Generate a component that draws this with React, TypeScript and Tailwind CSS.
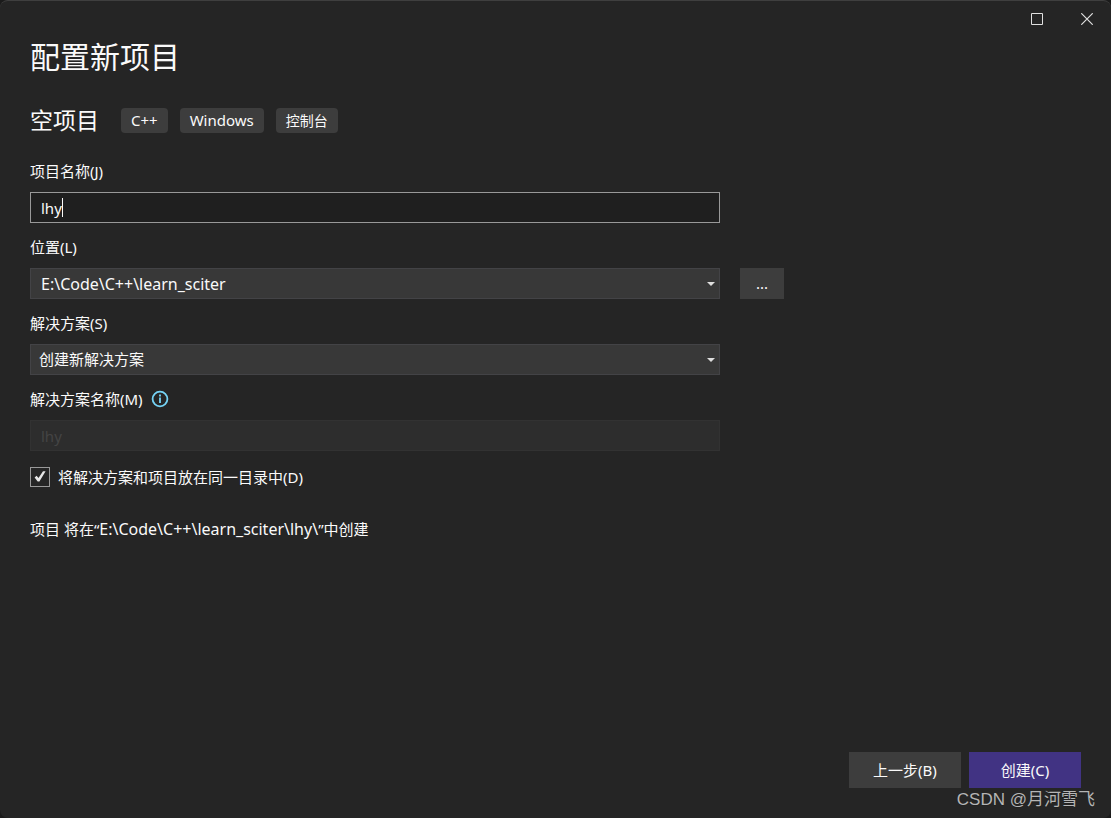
import { useState } from "react";
import type { ReactNode } from "react";

const TAGS = [
  { text: "C++", size: "text-[15px]" },
  { text: "Windows", size: "text-[15px]" },
  { text: "控制台", size: "text-sm" },
];

function Label({ htmlFor, children }: { htmlFor: string; children: ReactNode }) {
  return (
    <label htmlFor={htmlFor} className="block w-fit text-[15px] leading-5">
      {children}
    </label>
  );
}

function DropDown({ id, options, className }: { id: string; options: string[]; className: string }) {
  return (
    <div className="relative w-full max-w-[690px]">
      <select
        id={id}
        className={`block h-[31px] w-full appearance-none border border-[#434346] bg-[#383838] pr-6 outline-none ${className}`}
      >
        {options.map((option) => (
          <option key={option}>{option}</option>
        ))}
      </select>
      <svg
        className="pointer-events-none absolute top-3.5 right-[5px] h-1 w-2"
        viewBox="0 0 8 4"
        fill="#dedede"
        aria-hidden="true"
      >
        <path d="M0 0h8L4 4z" />
      </svg>
    </div>
  );
}

export default function App() {
  const [name, setName] = useState("lhy");
  const [touched, setTouched] = useState(false);
  const [sameFolder, setSameFolder] = useState(true);

  return (
    <div className="min-h-screen bg-[#1b1b1b] font-['Noto_Sans','Noto_Sans_CJK_SC',sans-serif] text-[#fafafa]">
      <div className="relative flex min-h-screen flex-col rounded-lg border-t border-[#3f3f3f] bg-[#252525]">
        <header className="flex h-9 justify-end">
          <button type="button" aria-label="最大化" className="flex w-[50px] items-center justify-center pl-0.5">
            <svg className="h-3 w-3" viewBox="0 0 12 12" fill="none" stroke="#e0e0e0">
              <path d="M.5 .5h11v11H.5z" />
            </svg>
          </button>
          <button type="button" aria-label="关闭" className="flex w-[50px] items-center justify-center pl-0.5">
            <svg className="h-3 w-3" viewBox="0 0 12 12" fill="none" stroke="#e0e0e0" strokeWidth="1.2">
              <path d="M.3 .3l11.4 11.4M11.7 .3L.3 11.7" />
            </svg>
          </button>
        </header>

        <main className="flex flex-1 flex-col px-[30px] pb-[30px]">
          <h1 className="text-[30px] leading-10">配置新项目</h1>

          <div className="mt-[27px] flex h-8 items-center gap-3">
            <h2 className="mr-2.5 text-[23px] leading-8">空项目</h2>
            {TAGS.map((tag) => (
              <span key={tag.text} className={`rounded bg-[#3d3d3d] px-2.5 leading-[25px] ${tag.size}`}>
                {tag.text}
              </span>
            ))}
          </div>

          <form className="mt-[25px] flex flex-col gap-3.5">
            <div className="flex flex-col gap-[11px]">
              <Label htmlFor="name">项目名称(J)</Label>
              <div className="relative w-full max-w-[690px]">
                <input
                  id="name"
                  value={name}
                  onFocus={() => setTouched(true)}
                  onChange={(e) => setName(e.target.value)}
                  className="block h-[31px] w-full border border-[#999] bg-[#1f1f1f] px-2.5 text-[15px] outline-none"
                />
                {!touched && (
                  <span className="pointer-events-none absolute top-1.5 left-8 h-[19px] w-px bg-[#fafafa]" />
                )}
              </div>
            </div>

            <div className="flex flex-col gap-[11px]">
              <Label htmlFor="location">位置(L)</Label>
              <div className="flex gap-5">
                <DropDown id="location" options={["E:\\Code\\C++\\learn_sciter"]} className="pl-2.5 text-base" />
                <button type="button" aria-label="浏览" className="h-[31px] w-11 shrink-0 bg-[#3d3d3d] text-[15px]">
                  ...
                </button>
              </div>
            </div>

            <div className="flex flex-col gap-[11px]">
              <Label htmlFor="solution">解决方案(S)</Label>
              <DropDown id="solution" options={["创建新解决方案"]} className="pl-2 text-[15px]" />
            </div>

            <div className="flex flex-col gap-[11px]">
              <div className="flex items-center gap-2">
                <Label htmlFor="solution-name">解决方案名称(M)</Label>
                <svg className="h-[18px] w-[18px]" viewBox="0 0 18 18" fill="none" stroke="#75d3f5" strokeWidth="1.8">
                  <circle cx="9" cy="9" r="7.4" />
                  <path d="M9 7.5v5.5M9 4.6v1.8" />
                </svg>
              </div>
              <input
                id="solution-name"
                disabled
                value={name}
                readOnly
                className="h-[31px] w-full max-w-[690px] border border-[#323232] bg-[#2d2d2d] px-2.5 text-[15px] text-[#444]"
              />
            </div>

            <label className="flex w-fit items-center gap-2 text-[15px] leading-6">
              <span className="relative flex">
                <input
                  type="checkbox"
                  checked={sameFolder}
                  onChange={(e) => setSameFolder(e.target.checked)}
                  className="h-5 w-5 appearance-none border border-[#999] bg-[#252525]"
                />
                {sameFolder && (
                  <svg
                    className="pointer-events-none absolute top-1 left-1 h-3 w-3"
                    viewBox="0 0 12 12"
                    fill="#e6e6e6"
                    aria-hidden="true"
                  >
                    <path d="M.6 6.4L2.6 4.8 4.5 7 9 .2 11.6 .2 5.4 10.6 3.7 10.6z" />
                  </svg>
                )}
              </span>
              将解决方案和项目放在同一目录中(D)
            </label>
          </form>

          <p className="mt-7 text-[15px] leading-6">
            项目 将在“<span className="text-base">E:\Code\C++\learn_sciter\{name}\</span>”中创建
          </p>

          <footer className="mt-auto flex justify-end gap-2">
            <button type="button" className="h-9 w-28 bg-[#3d3d3d] text-[15px]">
              上一步(B)
            </button>
            <button type="button" className="h-9 w-28 bg-[#413383] text-[15px]">
              创建(C)
            </button>
          </footer>
        </main>

        <span className="absolute right-4 bottom-1.5 font-['Liberation_Sans','Noto_Sans_CJK_SC',sans-serif] text-[17px] leading-6 text-[#b5b5b5] text-shadow-2xs">
          CSDN @月河雪飞
        </span>
      </div>
    </div>
  );
}
